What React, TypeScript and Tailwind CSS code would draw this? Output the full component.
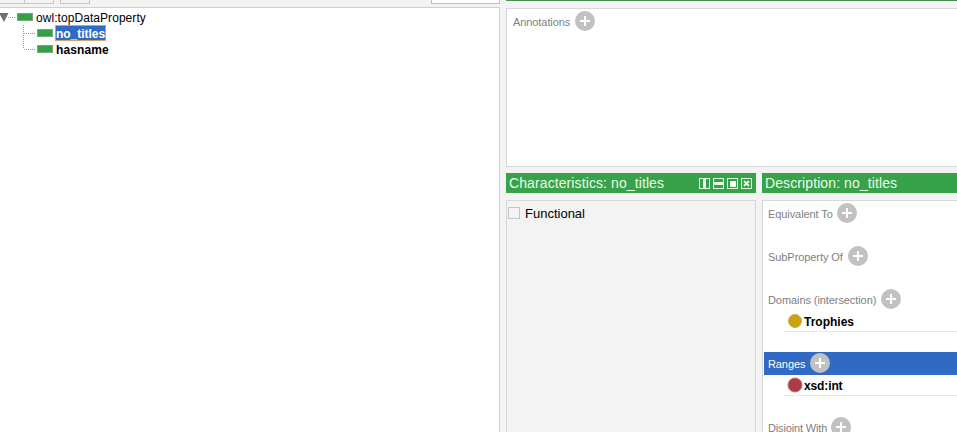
import React from "react";

function Plus() {
  return (
    <svg width="20" height="20" viewBox="0 0 20 20" className="shrink-0">
      <circle cx="10" cy="10" r="10" fill="#c1c1c1" />
      <path d="M10 5v10M5 10h10" stroke="#fff" strokeWidth="2" />
    </svg>
  );
}

function Heading({ label, width, selected = false }: { label: string; width: string; selected?: boolean }) {
  return (
    <div className={`flex h-[23px] items-start pt-px pl-1 ${selected ? "bg-[#316ac5] text-white" : "text-[#808080]"}`}>
      <span className={`shrink-0 whitespace-nowrap pt-[3px] text-[11px] leading-4 ${width}`}>{label}</span>
      <Plus />
    </div>
  );
}

function Item({ label, fill, ring, r, spacing }: { label: string; fill: string; ring: string; r: number; spacing: string }) {
  return (
    <div className="ml-5 flex h-[21px] items-center border-b border-[#e8e8e8] pl-[3px]">
      <svg width="16" height="16" viewBox="0 0 16 16" className="shrink-0">
        <circle cx="8" cy="8" r={r} fill={fill} stroke={ring} />
      </svg>
      <span className={`ml-px pt-px text-[12px] leading-4 font-bold text-black ${spacing}`}>{label}</span>
    </div>
  );
}

function Swatch() {
  return <span className="h-2 w-4 shrink-0 border border-[#76ab79] bg-[#35a048]" />;
}

function WindowIcons() {
  return (
    <svg width="54" height="12" viewBox="0 0 54 12" fill="none" stroke="#e4f9e4" className="mt-0.5 mr-[3px]" shapeRendering="crispEdges">
      <path d="M.5.5h10v10H.5zM14.5.5h10v10h-10zM28.500.5h10v10h-10zM42.500.5h10v10h-10z" />
      <path d="M5.500 1v9" strokeWidth="3" />
      <path d="M15 5.500h9" strokeWidth="3" />
      <path d="M31 3h5v5h-5z" fill="#fff" />
      <path d="M45 3l5 5M50 3l-5 5" strokeWidth="1.8" shapeRendering="auto" />
    </svg>
  );
}

export default function App() {
  return (
    <div className="flex h-[432px] w-[957px] overflow-hidden bg-[#f3f3f3] font-['Liberation_Sans',Arial,sans-serif] text-black">
      <section className="flex w-[500px] shrink-0 flex-col">
        <div className="flex h-[7px] items-start">
          <div className="h-1 w-[25px] border-r border-b border-[#c6c6c6]" />
          <div className="h-1 w-[29px] border-r border-b border-[#c6c6c6]" />
          <div className="ml-[6px] h-1 w-[30px] border-x border-b border-[#c6c6c6]" />
          <div className="ml-auto h-1 w-[69px] border-x border-b border-[#c0c0c0] bg-white" />
        </div>
        <div className="flex-1 border-t border-r border-[#cfcfcf] bg-white pt-px">
          <div className="flex h-4 items-center">
            <svg width="17" height="12" viewBox="0 0 17 12" className="shrink-0">
              <path d="M-1 2H8.500L4 11Z" fill="#707070" />
              <path d="M8 6.500h8" stroke="#999" strokeDasharray="1 1" />
            </svg>
            <Swatch />
            <span className="ml-[3px] pt-0.5 text-[12px] leading-4 tracking-[0.06px]">owl:topDataProperty</span>
          </div>
          <div className="flex">
            <svg width="37" height="32" viewBox="0 0 37 32" className="shrink-0">
              <path d="M23.500 0v24M24 8.500h12M24 24.500h12" fill="none" stroke="#999" strokeDasharray="1 1" />
            </svg>
            <div className="flex flex-col">
              <div className="flex h-4 items-center">
                <Swatch />
                <span className="ml-[2px] h-4 w-[51px] border border-[#d1a65a] bg-[#316ac5] text-[12px] leading-4 font-bold whitespace-nowrap tracking-[-0.02px] text-white">no_titles</span>
              </div>
              <div className="flex h-4 items-center">
                <Swatch />
                <span className="ml-[3px] pt-0.5 text-[12px] leading-4 font-bold tracking-[0.1px]">hasname</span>
              </div>
            </div>
          </div>
        </div>
      </section>

      <main className="ml-[6px] flex w-[451px] shrink-0 flex-col">
        <div className="h-px bg-[#449250]" />
        <div className="mt-[7px] h-[159px] border border-r-0 border-[#d3d8da] bg-white pt-[2px] pl-[6px]">
          <div className="flex text-[#808080]">
            <span className="w-[62px] pt-[3px] text-[11px] leading-4 tracking-[-0.08px]">Annotations</span>
            <Plus />
          </div>
        </div>
        <div className="mt-[6px] flex flex-1 gap-[6px]">
          <section className="flex w-[250px] shrink-0 flex-col">
            <header className="flex h-5 items-center justify-between bg-[#38a24a] pl-[3px] text-[#e9fbe9]">
              <span className="text-[14px] leading-5 tracking-[0.1px]">Characteristics: no_titles</span>
              <WindowIcons />
            </header>
            <div className="mt-[7px] flex-1 border border-b-0 border-[#d3d8da] pt-1 pl-px">
              <label className="flex h-4 items-center">
                <span className="h-3 w-3 border border-[#c0c7cb] bg-[#f4f4f4]" />
                <span className="ml-[5px] pt-[2px] text-[13px] leading-4">Functional</span>
              </label>
            </div>
          </section>
          <section className="flex w-[195px] shrink-0 flex-col">
            <header className="h-5 bg-[#38a24a] pl-[3px] text-[14px] leading-5 tracking-[0.1px] text-[#e9fbe9]">Description: no_titles</header>
            <div className="mt-[7px] flex h-[232px] flex-col overflow-hidden border border-r-0 border-b-0 border-[#d3d8da] bg-white pt-px pl-px">
              <div className="flex shrink-0 flex-col gap-5">
                <Heading label="Equivalent To" width="w-[69px] tracking-[-0.08px]" />
                <Heading label="SubProperty Of" width="w-[80px] tracking-[-0.07px]" />
                <div>
                  <Heading label="Domains (intersection)" width="w-[113px] tracking-[-0.08px]" />
                  <Item label="Trophies" fill="#cca30b" ring="#c4aa54" r={6.5} spacing="tracking-[0px]" />
                </div>
                <div>
                  <Heading label="Ranges" width="w-[42px] tracking-[-0.1px]" selected />
                  <Item label="xsd:int" fill="#ad3b45" ring="#c66a72" r={7} spacing="tracking-[-0.12px]" />
                </div>
                <Heading label="Disjoint With" width="w-[63px] tracking-[-0.15px]" />
              </div>
            </div>
          </section>
        </div>
      </main>
    </div>
  );
}
